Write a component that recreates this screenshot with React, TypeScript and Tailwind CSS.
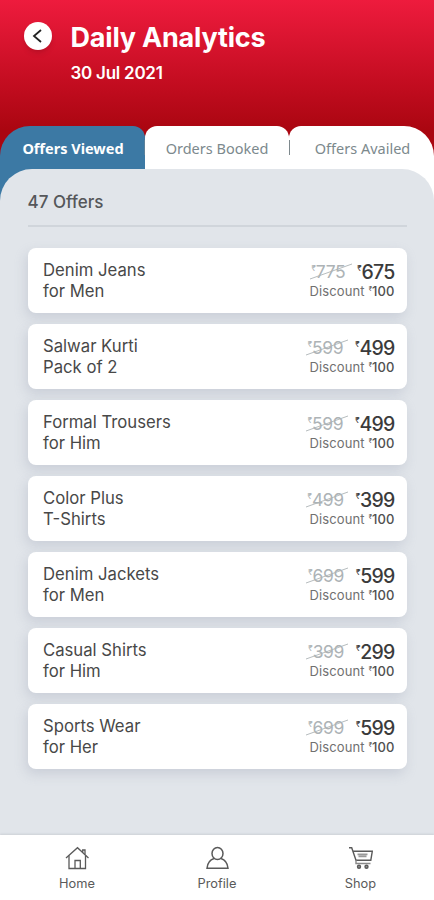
import { useState } from "react";

interface Offer {
  name: string;
  detail: string;
  oldPrice: number;
  price: number;
  discount: number;
}

const totalOffers = 47;

const offers: Offer[] = [
  { name: "Denim Jeans", detail: "for Men", oldPrice: 775, price: 675, discount: 100 },
  { name: "Salwar Kurti", detail: "Pack of 2", oldPrice: 599, price: 499, discount: 100 },
  { name: "Formal Trousers", detail: "for Him", oldPrice: 599, price: 499, discount: 100 },
  { name: "Color Plus", detail: "T-Shirts", oldPrice: 499, price: 399, discount: 100 },
  { name: "Denim Jackets", detail: "for Men", oldPrice: 699, price: 599, discount: 100 },
  { name: "Casual Shirts", detail: "for Him", oldPrice: 399, price: 299, discount: 100 },
  { name: "Sports Wear", detail: "for Her", oldPrice: 699, price: 599, discount: 100 },
];

const tabs = [
  { label: "Offers Viewed", shape: "w-[145px] rounded-tl-[30px] rounded-tr-[12px] pl-px" },
  { label: "Orders Booked", shape: "z-10 w-[144px] rounded-t-[12px]" },
  { label: "Offers Availed", shape: "w-[145px] rounded-tl-[12px] rounded-tr-[30px] pl-0.5" },
];

function HomeIcon() {
  return (
    <svg width="24" height="24" viewBox="0 0 24 24" fill="none" stroke="#5a5a5a" strokeWidth="1.3">
      <path d="M1 12 12.5 1.7 23.5 12" />
      <path d="M4 9.5v13h16.5v-13M17.7 6.3V4H20v4.5" />
      <path d="M10 22.5v-8h5.3v8" />
    </svg>
  );
}

function ProfileIcon() {
  return (
    <svg width="24" height="24" viewBox="0 0 24 24" fill="none" stroke="#5a5a5a" strokeWidth="1.5">
      <ellipse cx="12.5" cy="7.5" rx="5.5" ry="6" />
      <path d="M9 12.5c-4 1.3-6.5 4.5-7 9.7h21c-.5-5.2-3-8.4-7-9.7" />
    </svg>
  );
}

function ShopIcon() {
  return (
    <svg width="24" height="24" viewBox="0 0 24 24" fill="none" stroke="#5a5a5a" strokeWidth="1.4">
      <path d="M0 1.7h2.7L7 14.2h14.8l1.5-8.9H3.8" />
      <path d="M8.5 8.3h10M9.5 10.3h8" stroke="#9a9a9a" strokeWidth="1.8" />
      <path d="M7 14.2v3.3h14.5" stroke="#8a8a8a" />
      <circle cx="10" cy="20.7" r="1.5" fill="#999" />
      <circle cx="17.5" cy="20.7" r="1.5" fill="#999" />
    </svg>
  );
}

function OfferCard({ offer }: { offer: Offer }) {
  return (
    <div className="flex h-[65.5px] justify-between rounded-lg bg-white pt-3 pr-3 pl-[15.5px] shadow-[-2px_5px_12px_rgba(150,155,175,0.3)]">
      <div className="text-[16.7px] leading-[21px] text-[#484848]">
        <div>{offer.name}</div>
        <div>{offer.detail}</div>
      </div>
      <div className="flex flex-col items-end pt-px">
        <div className="flex h-[23.5px] items-center gap-3">
          <div className="relative flex items-start text-[#adb3b6]">
            <span className="mt-0.5 text-[8px] leading-3">₹</span>
            <span className="text-[17.5px] leading-[24px] tracking-[-0.4px]">{offer.oldPrice}</span>
            <svg className="absolute top-0.5 -left-0.5" width="43" height="20" viewBox="0 0 43 20" stroke="#adb3b6" strokeWidth="0.9">
              <path d="M0 17 42 2" />
            </svg>
          </div>
          <div className="flex items-start text-[#3b3b3b]">
            <span className="mt-0.5 text-[8px] leading-3">₹</span>
            <span className="text-[19.5px] leading-[24px] font-medium tracking-[-0.8px]">{offer.price}</span>
          </div>
        </div>
        <div className="flex items-start text-[13px] leading-[14px] tracking-[0.1px] text-[#707070]">
          <span>Discount</span>
          <span className="ml-1 text-[6px] leading-[10px] text-[#4a4a4a]">₹</span>
          <span className="font-medium text-[#505050]">{offer.discount}</span>
        </div>
      </div>
    </div>
  );
}

export default function App() {
  const [active, setActive] = useState(0);

  return (
    <div className="flex h-[900px] w-[434px] flex-col overflow-hidden bg-[#e1e5ea] font-['Inter','Noto_Sans',sans-serif]">
      {/* Header */}
      <div className="bg-linear-to-b from-[#ee1b3d] via-[#c50d21] via-[80px] to-[#aa0610] to-[130px]">
        <header className="flex h-[126px] items-start pt-[22px] pl-6">
          <button aria-label="Back" className="flex size-7 items-center justify-center rounded-full bg-white shadow-md">
            <svg width="28" height="28" viewBox="0 0 28 28" fill="none" stroke="#222" strokeWidth="1.8">
              <path d="M17 8l-7 6 7 6" />
            </svg>
          </button>
          <div className="pl-[18.5px] text-white">
            <h1 className="text-[27px] leading-[31px] font-bold tracking-[-0.2px]">Daily Analytics</h1>
            <p className="mt-2.5 text-[17px] leading-5 font-semibold tracking-[-0.25px]">30 Jul 2021</p>
          </div>
        </header>

        {/* Tabs */}
        <div className="flex h-[75px]">
          {tabs.map((tab, i) => (
            <button
              key={tab.label}
              onClick={() => setActive(i)}
              className={`relative flex items-start justify-center pt-[11.5px] text-[14.5px] leading-5 font-['Noto_Sans'] ${tab.shape} ${
                active === i ? "bg-[#3c79a4] font-bold text-white" : "bg-white text-[#7c898d]"
              }`}
            >
              {tab.label}
              {i < tabs.length - 1 && (
                <span className={`absolute top-3.5 h-[15px] w-px bg-[#7e898d] ${active === i ? "right-0 opacity-50" : "-right-px"}`} />
              )}
            </button>
          ))}
        </div>
      </div>

      {/* Offers list */}
      <main className="relative z-20 -mt-8 flex-1 rounded-t-[32px] bg-[#e1e5ea] px-[27.5px] pt-[23px]">
        <h2 className="text-[17px] leading-5 font-medium text-[#55575a]">{totalOffers} Offers</h2>
        <div className="mt-[12.5px] h-0.5 bg-[#d0d5db]" />
        <div className="mt-[21px] flex flex-col gap-[10.5px]">
          {offers.map((offer, i) => (
            <OfferCard key={i} offer={offer} />
          ))}
        </div>
      </main>

      {/* Bottom navigation */}
      <nav className="relative z-20 flex h-[65px] bg-white pt-[11px] text-[12.8px] leading-4 text-[#5a5a5a] shadow-[0_-1px_2px_rgba(120,125,135,0.2)]">
        <a className="flex w-[154px] flex-col items-center gap-1.5">
          <HomeIcon />
          Home
        </a>
        <a className="flex w-[126px] flex-col items-center gap-1.5">
          <ProfileIcon />
          Profile
        </a>
        <a className="flex flex-1 flex-col items-center gap-1.5 pl-[7px]">
          <ShopIcon />
          Shop
        </a>
      </nav>
    </div>
  );
}
